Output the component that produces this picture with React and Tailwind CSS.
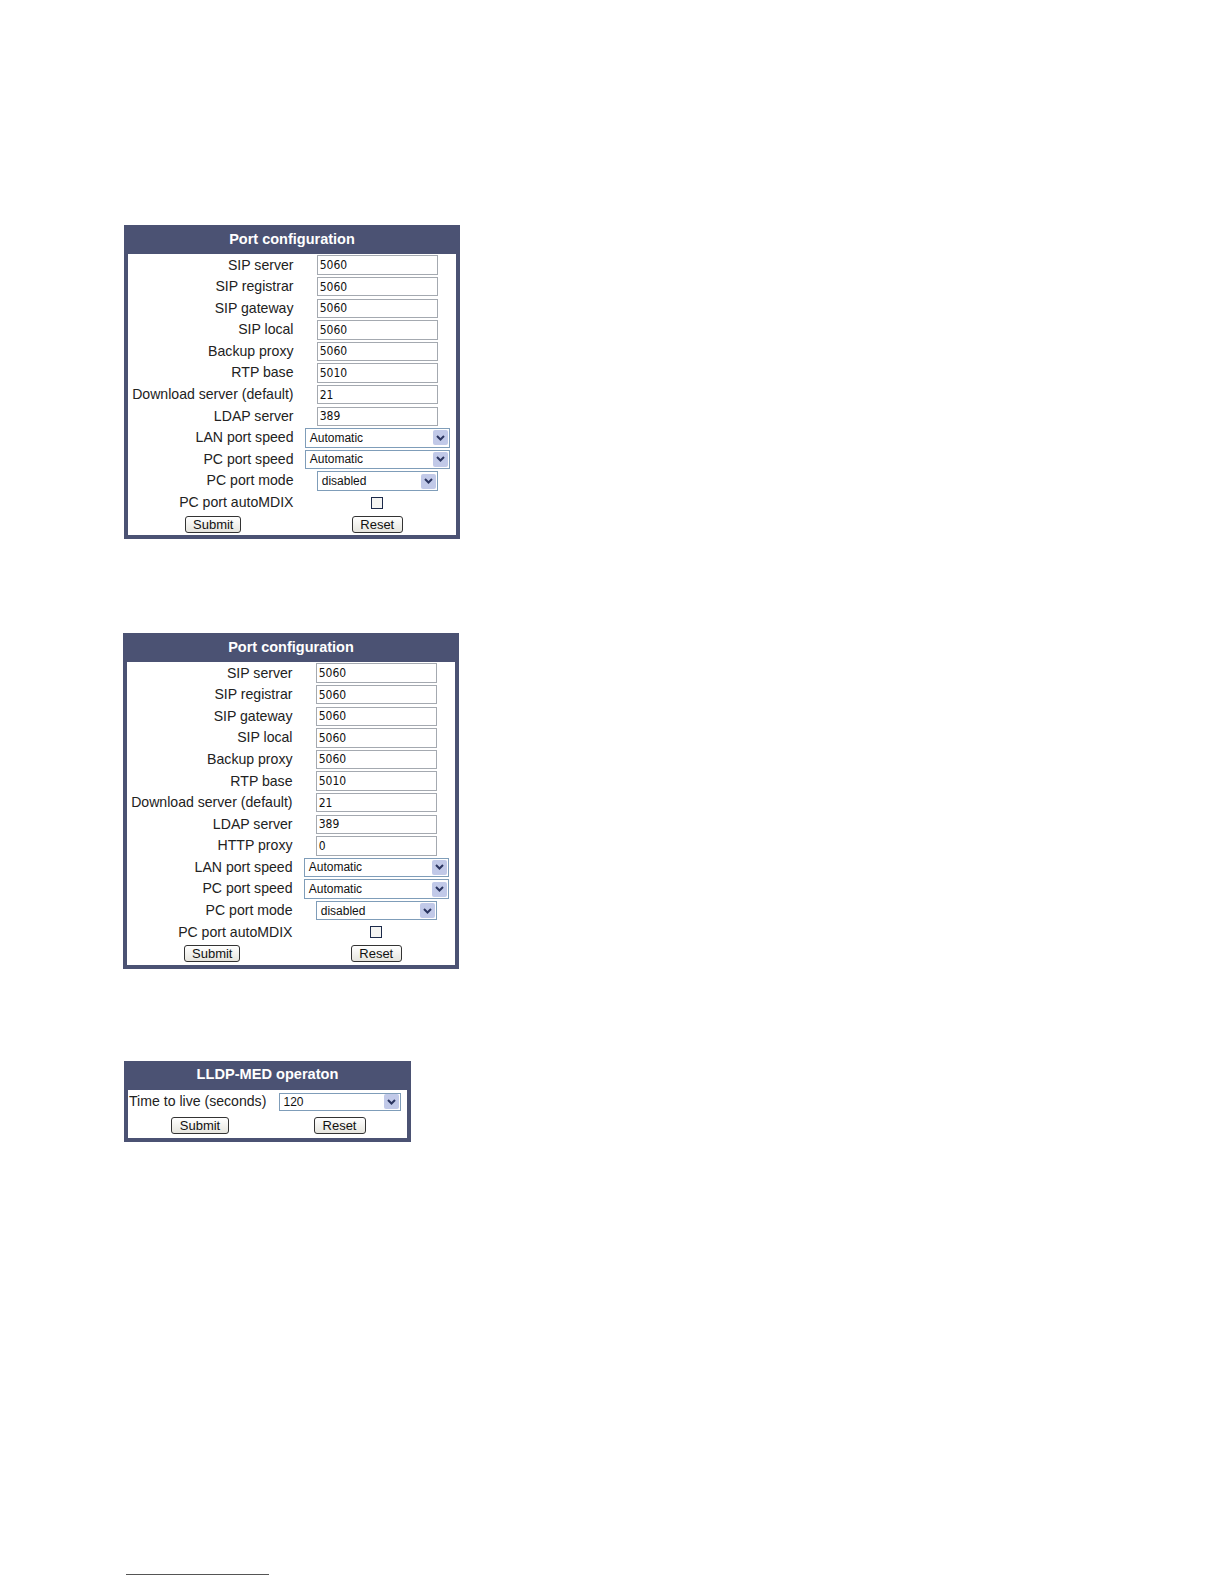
import React from 'react';

const portRows1 = [
  ['SIP server', 'input', '5060'],
  ['SIP registrar', 'input', '5060'],
  ['SIP gateway', 'input', '5060'],
  ['SIP local', 'input', '5060'],
  ['Backup proxy', 'input', '5060'],
  ['RTP base', 'input', '5010'],
  ['Download server (default)', 'input', '21'],
  ['LDAP server', 'input', '389'],
  ['LAN port speed', 'wide', 'Automatic'],
  ['PC port speed', 'wide', 'Automatic'],
  ['PC port mode', 'select', 'disabled'],
  ['PC port autoMDIX', 'check', ''],
];

const portRows2 = [
  ...portRows1.slice(0, 8),
  ['HTTP proxy', 'input', '0'],
  ...portRows1.slice(8),
];

function Arrow() {
  return (
    <div className="w-[15px] h-[15px] mr-[1px] bg-[#c1c9e8] rounded-[2px] flex items-center justify-center">
      <svg width="9" height="6" viewBox="0 0 9 6">
        <path d="M1 1 L4.5 4.5 L8 1" stroke="#2b3560" strokeWidth="2" fill="none" />
      </svg>
    </div>
  );
}

function Control({ type, value }) {
  if (type === 'input') {
    return (
      <div className="w-[121px] h-[19.5px] border border-[#a4a9b0] bg-white flex items-center pl-[2px] text-[12px] text-[#111] font-['DejaVu_Sans_Condensed',sans-serif]">
        {value}
      </div>
    );
  }
  if (type === 'check') {
    return <div className="w-[12px] h-[12px] border border-[#1c2a4a] bg-[#f4f4f2] mx-auto" />;
  }
  const w = type === 'wide' ? 'w-[145px]' : 'w-[121px]';
  return (
    <div className={`${w} h-[19.5px] border border-[#7f9db9] bg-white flex items-center justify-between pl-[4px] text-[12px] text-[#111]`}>
      <span>{value}</span>
      <Arrow />
    </div>
  );
}

function Button({ children, w }) {
  return (
    <div className={`${w} h-[17px] border border-[#333] rounded-[3px] bg-gradient-to-b from-white to-[#e6e5de] flex items-center justify-center text-[13px] text-[#111] leading-none`}>
      {children}
    </div>
  );
}

function Panel({ title, rows, ml, mt }) {
  return (
    <div className={`w-[336px] border-4 border-t-0 border-[#4b5273] ${ml} ${mt}`}>
      <div className="h-[29.3px] bg-[#4b5273] flex items-center justify-center text-white font-bold text-[14.5px]">{title}</div>
      <div className="bg-white">
        {rows.map(([label, type, value]) => (
          <div key={label} className="flex h-[21.6px] items-center">
            <div className="w-[170.5px] text-right text-[14.1px] text-[#222] pr-[5px] whitespace-nowrap">{label}</div>
            <div className="w-[157.5px] flex justify-center">
              <Control type={type} value={value} />
            </div>
          </div>
        ))}
        <div className="flex h-[21.6px] items-center">
          <div className="w-[170.5px] flex justify-center">
            <Button w="w-[56px]">Submit</Button>
          </div>
          <div className="w-[157.5px] flex justify-center">
            <Button w="w-[51px]">Reset</Button>
          </div>
        </div>
      </div>
    </div>
  );
}

export default function App() {
  return (
    <div className="min-h-screen bg-white font-['Liberation_Sans',Arial,sans-serif] pt-[225px] pb-[10px]">
      <Panel title="Port configuration" rows={portRows1} ml="ml-[124px]" mt="mt-0" />
      <Panel title="Port configuration" rows={portRows2} ml="ml-[123px]" mt="mt-[94px]" />

      <div className="w-[287px] border-4 border-t-0 border-[#4b5273] ml-[124px] mt-[92px]">
        <div className="h-[29.3px] bg-[#4b5273] flex items-center justify-center text-white font-bold text-[14.6px]">LLDP-MED operaton</div>
        <div className="bg-white">
          <div className="flex h-[24px] items-center">
            <div className="w-[144px] text-left pl-[1px] text-[14.1px] text-[#222] whitespace-nowrap">Time to live (seconds)</div>
            <div className="w-[135px] flex justify-center">
              <div className="w-[122px] h-[18px] border border-[#7f9db9] bg-white flex items-center justify-between pl-[4px] text-[12px] text-[#111]">
                <span>120</span>
                <Arrow />
              </div>
            </div>
          </div>
          <div className="flex h-[24px] items-center">
            <div className="w-[144px] flex justify-center">
              <Button w="w-[58px]">Submit</Button>
            </div>
            <div className="w-[135px] flex justify-center">
              <Button w="w-[52px]">Reset</Button>
            </div>
          </div>
        </div>
      </div>

      <div className="ml-[126px] mt-[432px] w-[143px] h-px bg-[#555]" />
    </div>
  );
}
